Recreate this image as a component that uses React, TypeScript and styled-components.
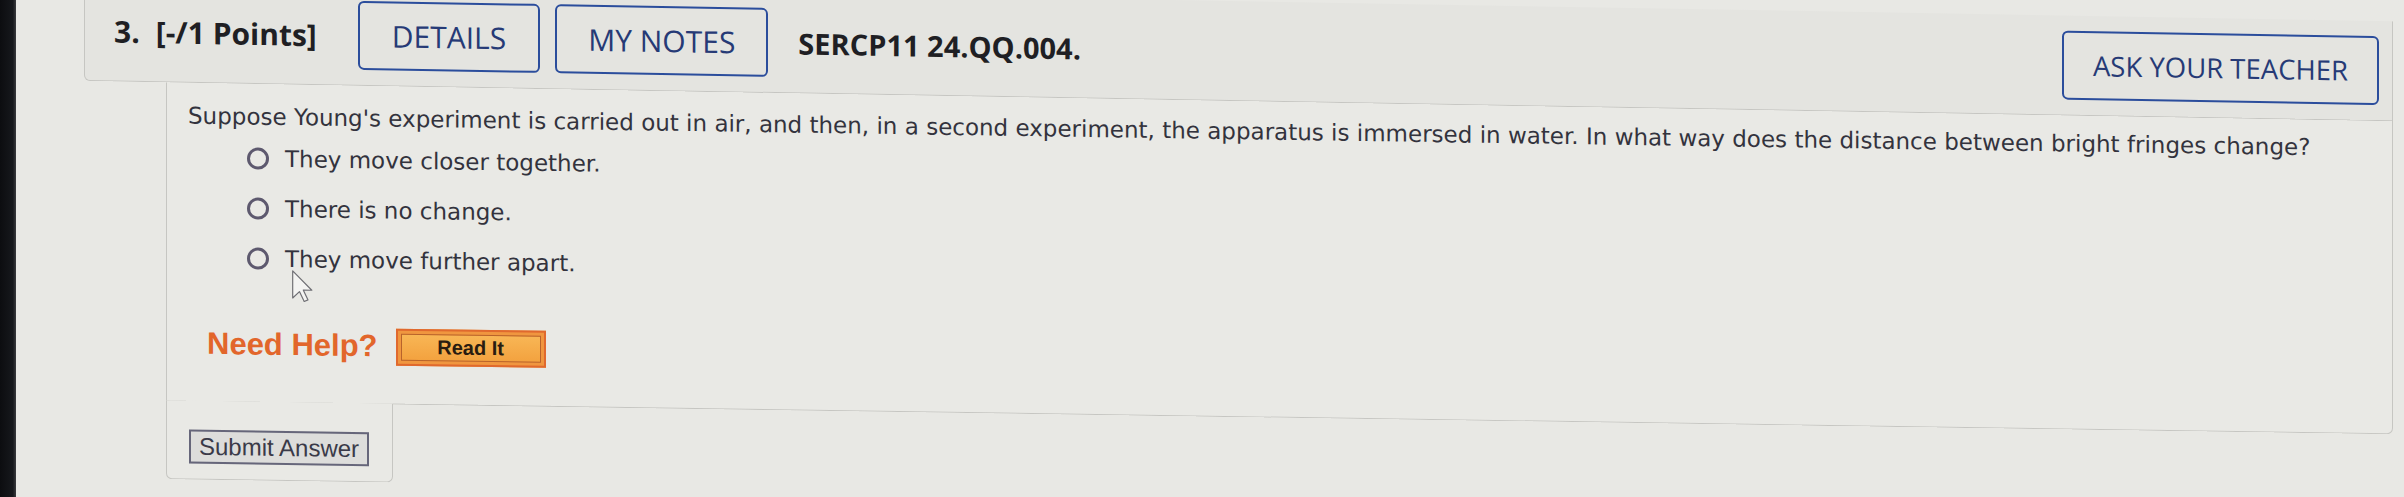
import React from "react";
import styled, { createGlobalStyle } from "styled-components";

const GlobalStyle = createGlobalStyle`
  html, body {
    margin: 0;
    padding: 0;
    background: #e8e8e4;
    overflow: hidden;
  }
  * { box-sizing: border-box; }
`;

const Screen = styled.div`
  display: flex;
  width: 2404px;
  height: 497px;
  overflow: hidden;
  background: #e8e8e4;
`;

const Bezel = styled.div`
  flex: 0 0 16px;
  background: linear-gradient(90deg, #0c0d10 0%, #16181c 80%, #3a3b3e 100%);
`;

/* the photo is taken at a slight angle: the whole page leans down to the right */
const Page = styled.main`
  flex: 1;
  display: flex;
  flex-direction: column;
  padding: 0 11px 0 68px;
  transform: skewY(0.85deg);
  transform-origin: 0 0;
`;

const Header = styled.header`
  margin-top: -20px;
  height: 100px;
  display: flex;
  align-items: center;
  padding: 0 13px 0 29px;
  background: #e4e4e0;
  border: 1px solid #c6c6c2;
  border-top: none;
  border-radius: 0 0 0 6px;
  font-family: "Open Sans", "Liberation Sans", sans-serif;
  color: #1f1f24;
  transform: skewY(0.15deg);
  transform-origin: 0 0;
`;

const HeaderLabel = styled.span<{ $gapLeft?: number; $size?: number }>`
  font-size: ${(p) => p.$size ?? 29}px;
  font-weight: 700;
  white-space: nowrap;
  margin-left: ${(p) => p.$gapLeft ?? 0}px;
`;

const OutlineButton = styled.button<{
  $gapLeft?: number;
  $auto?: boolean;
  $size?: number;
  $pad?: number;
}>`
  height: 69px;
  padding: 0 ${(p) => p.$pad ?? 32}px;
  margin-left: ${(p) => (p.$auto ? "auto" : `${p.$gapLeft ?? 0}px`)};
  background: transparent;
  border: 2px solid #2b4d9c;
  border-radius: 6px;
  font-family: "Open Sans", "Liberation Sans", sans-serif;
  font-size: ${(p) => p.$size ?? 30}px;
  font-weight: 500;
  color: #263a76;
  white-space: nowrap;
  cursor: pointer;
`;

const QuestionBox = styled.section`
  margin-left: 82px;
  background: #e9e9e5;
  border: 1px solid #c6c6c2;
  border-top: none;
  border-radius: 0 0 6px 0;
  padding: 18px 20px 37px 21px;
  font-family: "DejaVu Sans", Verdana, sans-serif;
  color: #33333d;
`;

const QuestionText = styled.p`
  margin: 0;
  font-size: 23px;
  line-height: 30px;
  white-space: nowrap;
`;

const OptionList = styled.div`
  position: relative;
  margin-top: 2px;
  padding-left: 59px;
  display: flex;
  flex-direction: column;
`;

const Option = styled.label`
  height: 50px;
  display: flex;
  align-items: center;
  gap: 16px;
  font-size: 23px;
`;

const Radio = styled.span`
  width: 22px;
  height: 22px;
  border: 3px solid #5d596e;
  border-radius: 50%;
  flex: 0 0 auto;
`;

const Pointer = styled.svg`
  position: absolute;
  left: 103px;
  top: 135px;
`;

const HelpRow = styled.div`
  margin-top: 41px;
  height: 40px;
  display: flex;
  align-items: center;
  gap: 18px;
  padding-left: 19px;
`;

const NeedHelp = styled.span`
  font-family: "Liberation Sans", Arial, sans-serif;
  font-weight: 700;
  font-size: 31px;
  color: #e2662b;
`;

const ReadIt = styled.button`
  width: 150px;
  height: 37px;
  padding: 3px;
  background: #f0963f;
  border: 2px solid #e0692e;
  border-radius: 0;
  display: flex;
  cursor: pointer;
`;

const ReadItFace = styled.span`
  flex: 1;
  display: flex;
  align-items: center;
  justify-content: center;
  background: linear-gradient(#f8b655, #f3a23f);
  border: 1px solid #b8632b;
  font-family: "Liberation Sans", Arial, sans-serif;
  font-weight: 700;
  font-size: 20px;
  color: #2a1c10;
`;

const SubmitTab = styled.div`
  position: relative;
  margin: -1px 0 0 82px;
  width: 227px;
  background: #e9e9e5;
  border: 1px solid #c6c6c2;
  border-top: none;
  border-radius: 0 0 6px 6px;
  padding: 29px 0 15px 22px;
`;

const SubmitButton = styled.button`
  height: 34px;
  padding: 0 8px;
  background: #dddddb;
  border: 2px solid #66667a;
  border-radius: 0;
  font-family: "Liberation Sans", Arial, sans-serif;
  font-size: 24px;
  color: #3a3a48;
  white-space: nowrap;
  cursor: pointer;
`;

const options = [
  "They move closer together.",
  "There is no change.",
  "They move further apart.",
];

export default function App() {
  return (
    <>
      <GlobalStyle />
      <Screen>
        <Bezel />
        <Page>
          <Header>
            <HeaderLabel $size={30}>3.</HeaderLabel>
            <HeaderLabel $gapLeft={16} $size={30}>[-/1 Points]</HeaderLabel>
            <OutlineButton $gapLeft={41}>DETAILS</OutlineButton>
            <OutlineButton $gapLeft={15} $pad={31}>MY NOTES</OutlineButton>
            <HeaderLabel $gapLeft={30}>SERCP11 24.QQ.004.</HeaderLabel>
            <OutlineButton $auto $size={27.5} $pad={29}>ASK YOUR TEACHER</OutlineButton>
          </Header>
          <QuestionBox>
            <QuestionText>
              Suppose Young's experiment is carried out in air, and then, in a second experiment, the apparatus is immersed in water. In what way does the distance between bright fringes change?
            </QuestionText>
            <OptionList>
              {options.map((o) => (
                <Option key={o}>
                  <Radio />
                  {o}
                </Option>
              ))}
              <Pointer width="22" height="34" viewBox="0 0 13 20">
                <path
                  d="M1 1 L1 17 L5 13.2 L7.8 19 L10 18 L7.3 12.3 L12.3 12.3 Z"
                  fill="#f4f4f2"
                  stroke="#6f6f74"
                  strokeWidth="0.7"
                  strokeLinejoin="round"
                />
              </Pointer>
            </OptionList>
            <HelpRow>
              <NeedHelp>Need Help?</NeedHelp>
              <ReadIt>
                <ReadItFace>Read It</ReadItFace>
              </ReadIt>
            </HelpRow>
          </QuestionBox>
          <SubmitTab>
            <SubmitButton>Submit Answer</SubmitButton>
          </SubmitTab>
        </Page>
      </Screen>
    </>
  );
}
